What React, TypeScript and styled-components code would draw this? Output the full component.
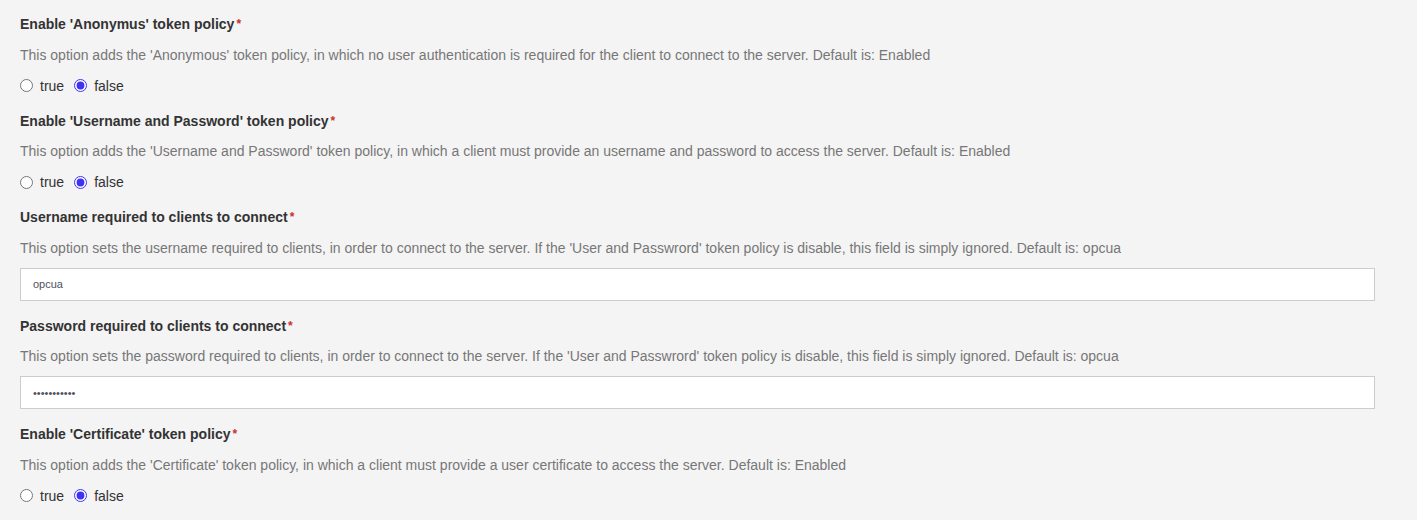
import React from "react";
import styled, { createGlobalStyle } from "styled-components";

const Global = createGlobalStyle`
  html, body { margin: 0; padding: 0; background: #f4f4f4; }
  body { font-family: "Liberation Sans", Arial, sans-serif; }
`;

const Page = styled.div`
  display: flex;
  flex-direction: column;
  padding: 15px 42px 0 20px;
`;

const Field = styled.div`
  display: flex;
  flex-direction: column;
`;

const Title = styled.div`
  font-size: 14px;
  font-weight: bold;
  color: #333;
  line-height: 18px;
  height: 18px;
`;

const Star = styled.span`
  color: #c9302c;
  margin-left: 2px;
  font-size: 12px;
  vertical-align: top;
`;

const Desc = styled.div`
  font-size: 14px;
  color: #777;
  line-height: 18px;
  margin-top: 12.5px;
`;

const Radios = styled.div`
  display: flex;
  align-items: center;
  margin-top: 13px;
  height: 18px;
  margin-bottom: 17px;
`;

const RadioLabel = styled.label`
  display: flex;
  align-items: center;
  font-size: 14px;
  color: #333;
  margin-right: 10px;
`;

const Radio = styled.input`
  width: 13px;
  height: 13px;
  margin: 0 7px 0 0;
  accent-color: #3d32f5;
`;

const Input = styled.input`
  margin-top: 11px;
  margin-bottom: 16px;
  height: 33px;
  box-sizing: border-box;
  border: 1px solid #ccc;
  background: #fff;
  padding: 0 12px;
  font-family: "Liberation Sans", Arial, sans-serif;
  font-size: 11px;
  color: #4f5060;
  outline: none;
  width: 100%;
`;

type Radio = { kind: "radio"; name: string; title: string; desc: string };
type Text = { kind: "text" | "password"; name: string; title: string; desc: string; value: string };

const fields: (Radio | Text)[] = [
  {
    kind: "radio",
    name: "anon",
    title: "Enable 'Anonymus' token policy",
    desc: "This option adds the 'Anonymous' token policy, in which no user authentication is required for the client to connect to the server. Default is: Enabled",
  },
  {
    kind: "radio",
    name: "userpass",
    title: "Enable 'Username and Password' token policy",
    desc: "This option adds the 'Username and Password' token policy, in which a client must provide an username and password to access the server. Default is: Enabled",
  },
  {
    kind: "text",
    name: "user",
    title: "Username required to clients to connect",
    desc: "This option sets the username required to clients, in order to connect to the server. If the 'User and Passwrord' token policy is disable, this field is simply ignored. Default is: opcua",
    value: "opcua",
  },
  {
    kind: "password",
    name: "pass",
    title: "Password required to clients to connect",
    desc: "This option sets the password required to clients, in order to connect to the server. If the 'User and Passwrord' token policy is disable, this field is simply ignored. Default is: opcua",
    value: "opcuaopcuaa",
  },
  {
    kind: "radio",
    name: "cert",
    title: "Enable 'Certificate' token policy",
    desc: "This option adds the 'Certificate' token policy, in which a client must provide a user certificate to access the server. Default is: Enabled",
  },
];

export default function App() {
  return (
    <>
      <Global />
      <Page>
        {fields.map((f) => (
          <Field key={f.name}>
            <Title>
              {f.title}
              <Star>*</Star>
            </Title>
            <Desc>{f.desc}</Desc>
            {f.kind === "radio" ? (
              <Radios>
                <RadioLabel>
                  <Radio type="radio" name={f.name} value="true" />
                  true
                </RadioLabel>
                <RadioLabel>
                  <Radio type="radio" name={f.name} value="false" defaultChecked />
                  false
                </RadioLabel>
              </Radios>
            ) : (
              <Input type={f.kind} defaultValue={(f as Text).value} />
            )}
          </Field>
        ))}
      </Page>
    </>
  );
}
